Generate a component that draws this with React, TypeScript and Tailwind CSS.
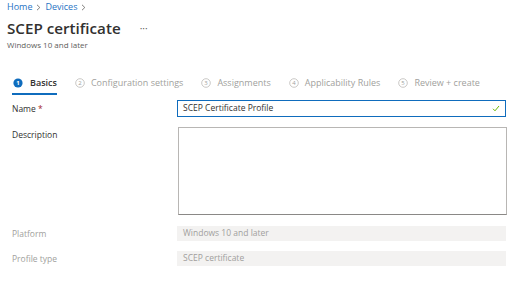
export default function App() {
    const tabs = [
        { n: "2", label: "Configuration settings" },
        { n: "3", label: "Assignments" },
        { n: "4", label: "Applicability Rules" },
        { n: "5", label: "Review + create" },
    ];

    return (
        <div className="w-[531px] h-[295px] overflow-hidden bg-white text-[#323130] font-['Open_Sans',sans-serif]">
            {/* Header */}
            <div className="px-[7px] pt-[1px]">
                <nav className="flex items-center gap-[4px] text-[9px] leading-[12px] text-[#1f73c4]">
                    <span>Home</span>
                    <Chevron />
                    <span>Devices</span>
                    <Chevron />
                </nav>
                <div className="mt-[5px] flex items-center">
                    <h1 className="text-[15.2px] leading-[20px] font-semibold">
                        SCEP certificate
                    </h1>
                    <span className="ml-[19px] text-[10px] leading-[20px] text-[#605e5c]">
                        ···
                    </span>
                </div>
                <p className="mt-[2px] text-[8px] leading-[10px] text-[#605e5c]">
                    Windows 10 and later
                </p>
            </div>

            {/* Tabs */}
            <div className="mt-[23px] flex items-center gap-[18px] pl-[12px]">
                <div className="flex h-[22px] items-center gap-[7px] border-b-2 border-[#0f6cbd] pl-[1px]">
                    <StepIcon n="1" active />
                    <span className="text-[9px] font-semibold leading-[20px] text-[#323130]">
                        Basics
                    </span>
                </div>
                {tabs.map((t) => (
                    <div
                        key={t.n}
                        className="flex h-[22px] items-center gap-[6px] border-b-2 border-transparent"
                    >
                        <StepIcon n={t.n} />
                        <span className="text-[9px] leading-[20px] text-[#a19f9d]">
                            {t.label}
                        </span>
                    </div>
                ))}
            </div>

            {/* Form */}
            <div className="mt-[5px] flex flex-col gap-[10px] pl-[12px]">
                {/* Name */}
                <div className="flex items-center">
                    <label className="w-[165px] text-[8.5px] leading-[12px]">
                        Name <span className="text-[#a4262c]">*</span>
                    </label>
                    <div className="flex h-[17px] w-[329px] items-center justify-between border border-[#0f6cbd] px-[5px]">
                        <span className="text-[8.5px] leading-none">
                            SCEP Certificate Profile
                        </span>
                        <svg width="8" height="7" viewBox="0 0 8 7" fill="none">
                            <path
                                d="M1 3.8 L3 5.8 L7 1"
                                stroke="#6bb700"
                                strokeWidth="1"
                            />
                        </svg>
                    </div>
                </div>

                {/* Description */}
                <div className="flex items-start">
                    <label className="mt-[2px] w-[166px] text-[8.5px] leading-[12px]">
                        Description
                    </label>
                    <div className="h-[88px] w-[329px] border border-[#b8b6b4] border-b-[#8a8886]" />
                </div>

                {/* Platform */}
                <div className="mt-[1px] flex items-center">
                    <label className="w-[165px] text-[8.5px] leading-[12px] text-[#a19f9d]">
                        Platform
                    </label>
                    <div className="flex h-[15px] w-[329px] items-center bg-[#f3f2f1] px-[6px] text-[8.5px] text-[#a19f9d]">
                        Windows 10 and later
                    </div>
                </div>

                {/* Profile type */}
                <div className="flex items-center">
                    <label className="w-[165px] text-[8.5px] leading-[12px] text-[#a19f9d]">
                        Profile type
                    </label>
                    <div className="flex h-[15px] w-[329px] items-center bg-[#f3f2f1] px-[6px] text-[8.5px] text-[#a19f9d]">
                        SCEP certificate
                    </div>
                </div>
            </div>
        </div>
    );
}

function StepIcon({ n, active }: { n: string; active?: boolean }) {
    return (
        <svg width="10" height="10" viewBox="0 0 10 10">
            {active ? (
                <circle cx="5" cy="5" r="4.6" fill="#0f6cbd" />
            ) : (
                <circle cx="5" cy="5" r="4.3" fill="none" stroke="#b3b0ad" strokeWidth="0.7" />
            )}
            <text
                x="5"
                y="7.1"
                textAnchor="middle"
                fontSize="6"
                fontWeight={active ? 700 : 400}
                fontFamily="Open Sans, sans-serif"
                fill={active ? "#ffffff" : "#a19f9d"}
            >
                {n}
            </text>
        </svg>
    );
}

function Chevron() {
    return (
        <svg width="5" height="7" viewBox="0 0 5 7" fill="none">
            <path d="M1 0.8 L3.8 3.5 L1 6.2" stroke="#605e5c" strokeWidth="0.8" />
        </svg>
    );
}
